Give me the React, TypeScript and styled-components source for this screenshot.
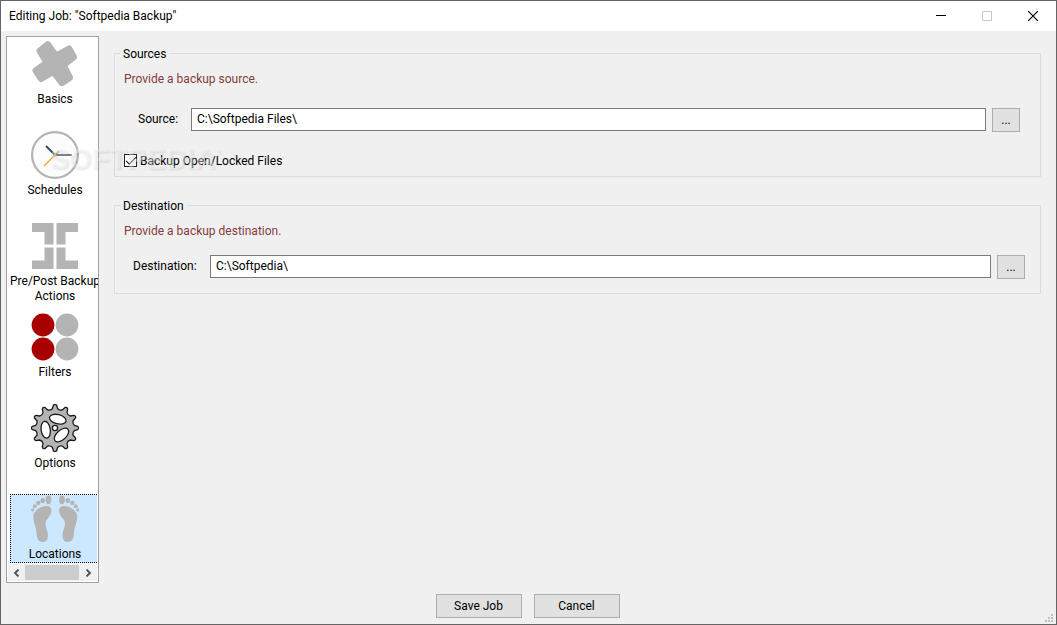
import React, { useState } from "react";
import styled, { createGlobalStyle } from "styled-components";

const GlobalStyle = createGlobalStyle`
  *, *::before, *::after { box-sizing: border-box; }
  body {
    margin: 0;
    background: #f0f0f0;
    color: #000;
    font: 12px/16px Roboto, "Segoe UI", sans-serif;
  }
  button, input { font: inherit; color: inherit; }
`;

const Window = styled.div`
  position: relative;
  display: flex;
  flex-direction: column;
  min-height: 100vh;
  border: 1px solid #646464;
  background: #f0f0f0;
`;

const TitleBar = styled.header`
  display: flex;
  align-items: center;
  justify-content: space-between;
  height: 30px;
  padding-left: 8px;
  background: #fff;
`;

const Title = styled.h1`
  margin: 0;
  font-size: 12px;
  font-weight: 400;
`;

const Controls = styled.div`
  display: flex;
`;

const ControlButton = styled.button`
  display: grid;
  place-items: center;
  width: 46px;
  height: 30px;
  padding: 0;
  border: 0;
  background: none;
  color: #000;
  &:disabled { color: #c8c8c8; }
`;

const Body = styled.div`
  display: flex;
  flex: 1;
  gap: 15px;
  padding: 5px 15px 0 5px;
`;

const Sidebar = styled.nav`
  display: flex;
  flex-direction: column;
  justify-content: space-between;
  flex: none;
  width: 93px;
  padding: 2px 1px 1px;
  border: 1px solid #a0a0a8;
  background: #fff;
  overflow: hidden;
`;

const PageList = styled.div`
  display: grid;
  grid-auto-rows: 91px;
  align-items: start;
  padding-left: 2px;
  margin-bottom: -21px;
`;

const PageButton = styled.button<{ $active: boolean }>`
  display: flex;
  flex-direction: column;
  align-items: center;
  gap: 4px;
  width: 87px;
  min-height: 69px;
  padding: 0 0 0 2px;
  border: 1px dotted ${(p) => (p.$active ? "#000" : "transparent")};
  border-right-width: 0;
  background: ${(p) => (p.$active ? "#cce8ff" : "transparent")};
  svg { display: block; flex: none; }
`;

const PageLabel = styled.span`
  line-height: 15px;
  text-align: center;
  white-space: pre;
`;

const ScrollBar = styled.div`
  display: flex;
  align-items: center;
  height: 17px;
  background: #f0f0f0;
`;

const ScrollArrow = styled.button`
  display: grid;
  place-items: center;
  flex: none;
  width: 17px;
  height: 16px;
  padding: 0;
  border: 0;
  background: none;
`;

const ScrollTrack = styled.div`
  flex: 1;
`;

const ScrollThumb = styled.div`
  width: 54px;
  height: 15px;
  background: #cdcdcd;
`;

const Form = styled.main`
  display: flex;
  flex-direction: column;
  flex: 1;
  gap: 20px;
  min-width: 0;
  padding-top: 9px;
`;

const Group = styled.fieldset<{ $inset: number; $bottom: number }>`
  min-width: 0;
  margin: 0;
  padding: 9px ${(p) => p.$inset}px ${(p) => p.$bottom}px 9px;
  border: 1px solid #dcdcdc;
`;

const Legend = styled.legend`
  margin-left: -4px;
  padding: 1px 3px 0;
`;

const Hint = styled.p<{ $gap: number }>`
  margin: 0 0 ${(p) => p.$gap}px;
  color: #853c3c;
`;

const Field = styled.div<{ $indent: number }>`
  display: flex;
  align-items: flex-start;
  gap: 6px;
  padding-left: ${(p) => p.$indent}px;
`;

const FieldLabel = styled.label<{ $width: number }>`
  flex: none;
  width: ${(p) => p.$width}px;
  line-height: 22px;
  white-space: nowrap;
`;

const PathInput = styled.input`
  flex: 1;
  min-width: 0;
  height: 23px;
  padding: 0 5px 1px;
  border: 1px solid #7a7a7a;
  border-radius: 0;
  background: #fff;
  outline: 0;
`;

const PushButton = styled.button<{ $small?: boolean }>`
  width: ${(p) => (p.$small ? 28 : 86)}px;
  height: 24px;
  padding: 0;
  border: 1px solid #adadad;
  background: #e1e1e1;
`;

const CheckRow = styled.label`
  display: flex;
  align-items: flex-start;
  gap: 3px;
  width: fit-content;
  margin-top: 21px;
`;

const CheckBox = styled.input`
  appearance: none;
  display: grid;
  place-items: center;
  width: 13px;
  height: 13px;
  margin: 1px 0 0;
  border: 1px solid #222;
  background: #fff;
  &:checked::before {
    content: "";
    width: 10px;
    height: 5px;
    margin-top: -3px;
    border: solid #111;
    border-width: 0 0 1px 1px;
    transform: rotate(-45deg);
  }
`;

const Footer = styled.footer`
  display: flex;
  justify-content: center;
  gap: 12px;
  padding: 11px 2px 6px 0;
`;

const Grip = styled.svg`
  position: absolute;
  right: 3px;
  bottom: 2px;
`;

const Watermark = styled.div`
  position: absolute;
  top: 141px;
  left: 49px;
  color: rgba(255, 255, 255, 0.4);
  font: bold 29px/34px "Liberation Sans", sans-serif;
  text-shadow: 1px 1px 2px rgba(0, 0, 0, 0.1);
  pointer-events: none;
  sup {
    font-size: 8px;
    line-height: 8px;
    vertical-align: 14px;
  }
`;

const gray = "#b4b4b4";

const BasicsIcon = () => (
  <svg width="48" height="48" viewBox="0 0 48 48">
    <path
      d="M9 11 L16.800 4.700 L23 13.500 Q25 16 28 14.500 L38 9 L42.500 17 L34 23.500 Q32 25.500 33.500 28 L38.500 37.500 L31 42.500 L24.500 34 Q22.500 31.500 19.500 33 L10 38.500 L5 30.500 L13.500 24.500 Q16 22.500 14.500 20Z"
      fill={gray}
      stroke={gray}
      strokeWidth="7"
      strokeLinejoin="round"
    />
  </svg>
);

const SchedulesIcon = () => (
  <svg width="48" height="48" viewBox="0 0 48 48" fill="none">
    <circle cx="24" cy="24" r="22.900" fill="#fcfcfc" stroke={gray} strokeWidth="2.200" />
    <path d="M13 35 28 20" stroke="#f0a030" strokeWidth="1.200" />
    <path d="M15 15 24 24" stroke="#344b55" strokeWidth="2" />
    <path d="M24 24H41" stroke="#52666e" strokeWidth="1.600" />
    <circle cx="24" cy="24" r="1.500" fill="#899" />
  </svg>
);

const ActionsIcon = () => (
  <svg width="48" height="48" viewBox="0 0 48 48" fill={gray}>
    <path d="M1 1H22.500V22.500H13.500V10H1Z M47 1H25.500V22.500H34.500V10H47Z M1 47H22.500V25.500H13.500V38.500H1Z M47 47H25.500V25.500H34.500V38.500H47Z" />
  </svg>
);

const FiltersIcon = () => (
  <svg width="48" height="48" viewBox="0 0 48 48">
    <circle cx="12" cy="12" r="11.400" fill="#a80000" />
    <circle cx="12" cy="36" r="11.400" fill="#a80000" />
    <circle cx="36" cy="12" r="11.400" fill={gray} />
    <circle cx="36" cy="36" r="11.400" fill={gray} />
  </svg>
);

const gearTeeth = Array.from({ length: 12 }, (_, i) => {
  const at = (r: number, deg: number) => {
    const a = ((i * 30 + deg - 90) * Math.PI) / 180;
    return `${(24 + r * Math.cos(a)).toFixed(1)} ${(24 + r * Math.sin(a)).toFixed(1)}`;
  };
  return `${i ? "L" : "M"}${at(19.5, -8)} L${at(22.8, -4)} Q${at(24.4, 0)} ${at(22.8, 4)} L${at(19.5, 8)} Q${at(18, 15)} ${at(19.5, 22)}`;
}).join(" ");

const OptionsIcon = () => (
  <svg width="48" height="48" viewBox="0 0 48 48" stroke="#1c1c1c" strokeWidth="1.300" strokeLinejoin="round">
    <path d={`${gearTeeth}Z`} fill={gray} />
    <g fill="#fff">
      <ellipse cx="26.800" cy="15.200" rx="8.500" ry="4.600" transform="rotate(14 26.800 15.200)" />
      <ellipse cx="14.700" cy="25.700" rx="4.600" ry="8.500" transform="rotate(-8 14.700 25.700)" />
      <ellipse cx="30.500" cy="31" rx="8.700" ry="4.800" transform="rotate(-42 30.500 31)" />
      <circle cx="24" cy="24" r="2.600" />
    </g>
  </svg>
);

const Foot = () => (
  <>
    <ellipse cx="17.500" cy="4.800" rx="2.900" ry="4.400" />
    <ellipse cx="11.700" cy="5.600" rx="2.300" ry="2.700" />
    <circle cx="7.200" cy="8" r="2.200" />
    <circle cx="3.800" cy="11.200" r="1.900" />
    <circle cx="1.700" cy="14.800" r="1.600" />
    <path d="M2.200 22C2 17 8 11.500 15 11C19 10.700 21 13 20.300 17C19.500 22 14.500 24 14.500 28.500C14.500 33 17.200 36 17 41C16.800 45 15 47 11.800 47C8 47 5.800 44 5.600 39C5.400 32 2.500 28 2.200 22Z" />
  </>
);

const LocationsIcon = () => (
  <svg width="48" height="48" viewBox="0 0 48 48" fill={gray}>
    <Foot />
    <g transform="translate(48.500 0) scale(-1 1)"><Foot /></g>
  </svg>
);

const pages = [
  { name: "Basics", icon: BasicsIcon },
  { name: "Schedules", icon: SchedulesIcon },
  { name: "Pre/Post Backup\nActions", icon: ActionsIcon },
  { name: "Filters", icon: FiltersIcon },
  { name: "Options", icon: OptionsIcon },
  { name: "Locations", icon: LocationsIcon },
];

export default function App() {
  const [page, setPage] = useState("Locations");
  const [source, setSource] = useState("C:\\Softpedia Files\\");
  const [destination, setDestination] = useState("C:\\Softpedia\\");
  const [openFiles, setOpenFiles] = useState(true);

  return (
    <>
      <GlobalStyle />
      <Window>
        <TitleBar>
          <Title>Editing Job: "Softpedia Backup"</Title>
          <Controls>
            <ControlButton aria-label="Minimize">
              <svg width="10" height="10"><path d="M0 4.500H10" stroke="currentColor" /></svg>
            </ControlButton>
            <ControlButton aria-label="Maximize" disabled>
              <svg width="10" height="10"><path d="M.5.5H9.500V9.500H.5Z" fill="none" stroke="currentColor" /></svg>
            </ControlButton>
            <ControlButton aria-label="Close">
              <svg width="10" height="10"><path d="M0 0 10 10M10 0 0 10" stroke="currentColor" strokeWidth="1.200" /></svg>
            </ControlButton>
          </Controls>
        </TitleBar>
        <Body>
          <Sidebar aria-label="Job pages">
            <PageList>
              {pages.map(({ name, icon: Icon }) => (
                <PageButton key={name} $active={page === name} onClick={() => setPage(name)}>
                  <Icon />
                  <PageLabel>{name}</PageLabel>
                </PageButton>
              ))}
            </PageList>
            <ScrollBar>
              <ScrollArrow aria-label="Scroll left">
                <svg width="7" height="8"><path d="M5.500.5 2 4 5.500 7.500" fill="none" stroke="#505050" strokeWidth="1.800" /></svg>
              </ScrollArrow>
              <ScrollTrack><ScrollThumb /></ScrollTrack>
              <ScrollArrow aria-label="Scroll right">
                <svg width="7" height="8"><path d="M1.500.5 5 4 1.500 7.500" fill="none" stroke="#505050" strokeWidth="1.800" /></svg>
              </ScrollArrow>
            </ScrollBar>
          </Sidebar>
          <Form>
            <Group $inset={20} $bottom={7}>
              <Legend>Sources</Legend>
              <Hint $gap={21}>Provide a backup source.</Hint>
              <Field $indent={14}>
                <FieldLabel htmlFor="source" $width={47}>Source:</FieldLabel>
                <PathInput id="source" value={source} onChange={(e) => setSource(e.target.value)} />
                <PushButton $small aria-label="Browse for source">...</PushButton>
              </Field>
              <CheckRow>
                <CheckBox type="checkbox" checked={openFiles} onChange={(e) => setOpenFiles(e.target.checked)} />
                Backup Open/Locked Files
              </CheckRow>
            </Group>
            <Group $inset={15} $bottom={14}>
              <Legend>Destination</Legend>
              <Hint $gap={16}>Provide a backup destination.</Hint>
              <Field $indent={9}>
                <FieldLabel htmlFor="destination" $width={71}>Destination:</FieldLabel>
                <PathInput id="destination" value={destination} onChange={(e) => setDestination(e.target.value)} />
                <PushButton $small aria-label="Browse for destination">...</PushButton>
              </Field>
            </Group>
          </Form>
        </Body>
        <Footer>
          <PushButton>Save Job</PushButton>
          <PushButton>Cancel</PushButton>
        </Footer>
        <Grip width="8" height="8" fill="#bfbfbf" aria-hidden="true">
          <path d="M6 0h2v2h-2zM3 3h2v2h-2zM6 3h2v2h-2zM0 6h2v2h-2zM3 6h2v2h-2zM6 6h2v2h-2z" />
        </Grip>
        <Watermark>SOFTPEDIA<sup>®</sup></Watermark>
      </Window>
    </>
  );
}
